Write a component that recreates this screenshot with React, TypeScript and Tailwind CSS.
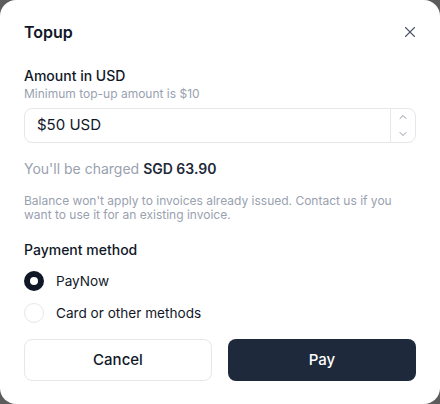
import { X, ChevronUp, ChevronDown } from "lucide-react";

export default function App() {
  return (
    <div
      className="w-[440px] h-[404px] bg-[#5c5c5c]"
      style={{ fontFamily: "Inter, 'Noto Sans', sans-serif" }}
    >
      <div className="h-full w-full rounded-2xl bg-white px-6 pt-5 pb-6 flex flex-col">
        {/* Header */}
        <div className="flex items-center justify-between h-6">
          <h2 className="text-[16px] leading-6 font-semibold text-gray-900">Topup</h2>
          <X className="h-[18px] w-[18px] text-gray-600 -mr-[3px]" strokeWidth={1.5} />
        </div>

        {/* Amount */}
        <div className="mt-[22px]">
          <label className="block text-sm leading-5 font-medium text-gray-900">Amount in USD</label>
          <p className="text-xs leading-4 text-gray-400">Minimum top-up amount is $10</p>
          <div className="mt-[6px] flex h-[35px] rounded-lg border border-gray-200">
            <div className="flex-1 flex items-center pl-3 text-[15px] text-gray-900">$50 USD</div>
            <div className="w-[25px] border-l border-gray-200 flex flex-col items-center justify-center gap-[5px]">
              <ChevronUp className="h-3 w-3 text-gray-500" strokeWidth={1.5} />
              <ChevronDown className="h-3 w-3 text-gray-500" strokeWidth={1.5} />
            </div>
          </div>
        </div>

        <p className="mt-4 text-sm leading-5 text-gray-400">
          You'll be charged <span className="font-semibold text-gray-800">SGD 63.90</span>
        </p>

        <p className="mt-[15px] text-xs leading-[13.5px] text-gray-400">
          Balance won't apply to invoices already issued. Contact us if you want to use it for an existing invoice.
        </p>

        {/* Payment method */}
        <p className="mt-[19px] text-sm leading-5 font-medium text-gray-900">Payment method</p>
        <div className="mt-[11px] flex flex-col gap-3">
          <label className="flex items-center gap-3 h-5">
            <span className="h-5 w-5 rounded-full bg-gray-900 flex items-center justify-center">
              <span className="h-2 w-2 rounded-full bg-white" />
            </span>
            <span className="text-[13.6px] text-gray-900">PayNow</span>
          </label>
          <label className="flex items-center gap-3 h-5">
            <span className="h-5 w-5 rounded-full border border-gray-200" />
            <span className="text-[13.6px] text-gray-900">Card or other methods</span>
          </label>
        </div>

        {/* Actions */}
        <div className="mt-4 grid grid-cols-2 gap-4">
          <button className="h-[42px] rounded-lg border border-gray-200 bg-white text-[15px] font-medium text-gray-900">
            Cancel
          </button>
          <button className="h-[42px] rounded-lg bg-[#1e293b] text-[15px] font-medium text-white">
            Pay
          </button>
        </div>
      </div>
    </div>
  );
}
